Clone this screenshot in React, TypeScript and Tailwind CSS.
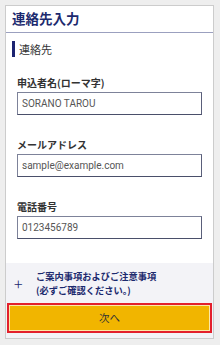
import React from 'react'

const jp = "font-['Noto_Sans_CJK_JP','Noto_Sans',sans-serif]"

function Field({ label, value }: { label: string; value: string }) {
  return (
    <div className="px-[11px]">
      <div className="h-[14px] text-[10px] leading-[14px] font-bold text-[#333333]">{label}</div>
      <div className="mt-[2px] h-[23px] border border-[#7d8299] border-b-[#4a4f6a] border-r-[#5a5f7a] bg-white flex items-center px-[4px]">
        <span className="font-['Roboto',sans-serif] text-[10px] text-[#555555]">{value}</span>
      </div>
    </div>
  )
}

export default function App() {
  return (
    <div className={`w-[220px] h-[345px] bg-[#eeeeee] pt-[5px] ${jp}`}>
      <div className="mx-[5px] w-[209px] border border-[#cccccc] bg-white">
        <div className="h-[27px] border-b border-[#9ba0bf] flex items-center pl-[6px]">
          <h1 className="text-[13.5px] font-bold text-[#1c2a6e] leading-none">連絡先入力</h1>
        </div>
        <div className="pt-[8px] pl-[6px] flex items-center h-[24px]">
          <div className="w-[3px] h-[16px] bg-[#1c2370]" />
          <span className="ml-[4px] text-[11px] text-[#333333] leading-none">連絡先</span>
        </div>
        <div className="pt-[19px] flex flex-col gap-[23px] pb-[24px]">
          <Field label="申込者名(ローマ字)" value="SORANO TAROU" />
          <Field label="メールアドレス" value="sample@example.com" />
          <Field label="電話番号" value="0123456789" />
        </div>
        <div className="bg-[#f3f3f7] pt-[5px] pb-[5px]">
          <div className="flex items-center pl-[8px] h-[30px]">
            <span className="text-[16px] text-[#1c2a6e] leading-none font-light w-[22px]">+</span>
            <div className="text-[9.25px] leading-[14px] font-bold text-[#1c2a6e]">
              <div>ご案内事項およびご注意事項</div>
              <div>(必ずご確認ください。)</div>
            </div>
          </div>
          <div className="mt-[5px] mx-[1px] border-2 border-[#e3202c]">
            <div className="border border-[#fde9a6] bg-[#f1b500] h-[26px] flex items-center justify-center">
              <span className="text-[10.5px] text-[#333333]">次へ</span>
            </div>
          </div>
        </div>
      </div>
    </div>
  )
}
